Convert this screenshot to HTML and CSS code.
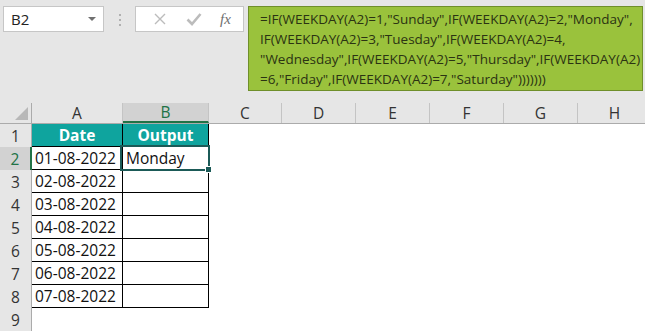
FILE: index.html
```html
<!DOCTYPE html>
<html lang="en">
<head>
    <meta charset="UTF-8">
    <title>WEEKDAY formula</title>
    <link rel="stylesheet" href="styles.css">
</head>
<body>
    <div class="toolbar">
        <div class="name-box">
            <span class="name">B2</span>
            <span class="caret"></span>
        </div>
        <div class="grip">
            <span></span><span></span><span></span>
        </div>
        <div class="fx-box">
            <svg class="fx-icon" width="14" height="14" viewBox="0 0 14 14">
                <path d="M2 2 L12 12 M12 2 L2 12" stroke="#bcbcbc" stroke-width="1.4" fill="none"/>
            </svg>
            <svg class="fx-icon" width="16" height="14" viewBox="0 0 16 14">
                <path d="M1.5 7.5 L6 12 L14.5 2" stroke="#bcbcbc" stroke-width="2.6" fill="none"/>
            </svg>
            <span class="fx">fx</span>
        </div>
        <div class="formula">
            =IF(WEEKDAY(A2)=1,"Sunday",IF(WEEKDAY(A2)=2,"Monday",<br>
            IF(WEEKDAY(A2)=3,"Tuesday",IF(WEEKDAY(A2)=4,<br>
            "Wednesday",IF(WEEKDAY(A2)=5,"Thursday",IF(WEEKDAY(A2)<br>
            =6,"Friday",IF(WEEKDAY(A2)=7,"Saturday")))))))
        </div>
    </div>

    <div class="sheet">
        <div class="row head">
            <div class="rh corner"><span class="tri"></span></div>
            <div class="ch col-a">A</div>
            <div class="ch col-b active">B</div>
            <div class="ch col-c">C</div>
            <div class="ch col-d">D</div>
            <div class="ch col-e">E</div>
            <div class="ch col-f">F</div>
            <div class="ch col-g">G</div>
            <div class="ch col-h">H</div>
        </div>
        <div class="row">
            <div class="rh">1</div>
            <div class="cell col-a title">Date</div>
            <div class="cell col-b title">Output</div>
        </div>
        <div class="row">
            <div class="rh active">2</div>
            <div class="cell col-a">01-08-2022</div>
            <div class="cell col-b selected">Monday</div>
        </div>
        <div class="row">
            <div class="rh">3</div>
            <div class="cell col-a">02-08-2022</div>
            <div class="cell col-b"></div>
        </div>
        <div class="row">
            <div class="rh">4</div>
            <div class="cell col-a">03-08-2022</div>
            <div class="cell col-b"></div>
        </div>
        <div class="row">
            <div class="rh">5</div>
            <div class="cell col-a">04-08-2022</div>
            <div class="cell col-b"></div>
        </div>
        <div class="row">
            <div class="rh">6</div>
            <div class="cell col-a">05-08-2022</div>
            <div class="cell col-b"></div>
        </div>
        <div class="row">
            <div class="rh">7</div>
            <div class="cell col-a">06-08-2022</div>
            <div class="cell col-b"></div>
        </div>
        <div class="row">
            <div class="rh">8</div>
            <div class="cell col-a">07-08-2022</div>
            <div class="cell col-b"></div>
        </div>
        <div class="row last">
            <div class="rh">9</div>
        </div>
    </div>
</body>
</html>
```

FILE: styles.css
```css
body {
    margin: 0;
    font-family: "Open Sans", "Liberation Sans", sans-serif;
    background-color: white;
    width: 645px;
    height: 332px;
    overflow: hidden;
}

.toolbar {
    display: flex;
    align-items: flex-start;
    height: 103px;
    padding: 6px 0 0 3px;
    box-sizing: border-box;
    background-color: #e6e6e6;
}

.name-box {
    display: flex;
    align-items: center;
    justify-content: space-between;
    width: 101px;
    height: 26px;
    padding: 0 7px 0 7px;
    box-sizing: border-box;
    background-color: white;
    border: 1px solid #c6c6c6;
}

.name {
    font-size: 15px;
    color: #222;
}

.caret {
    width: 0;
    height: 0;
    border-left: 4px solid transparent;
    border-right: 4px solid transparent;
    border-top: 4px solid #707070;
}

.grip {
    display: flex;
    flex-direction: column;
    gap: 3px;
    width: 31px;
    align-items: center;
    padding-top: 8px;
}

.grip span {
    width: 2px;
    height: 2px;
    background-color: #b0b0b0;
}

.fx-box {
    display: flex;
    align-items: center;
    justify-content: space-around;
    width: 109px;
    height: 26px;
    padding: 0 3px 0 8px;
    box-sizing: border-box;
    background-color: white;
    border: 1px solid #c6c6c6;
}

.fx {
    font-family: "Liberation Serif", serif;
    font-style: italic;
    font-size: 15px;
    color: #6e6e6e;
}

.formula {
    margin-left: 4px;
    width: 395px;
    height: 85px;
    padding: 2px 0 0 11px;
    box-sizing: border-box;
    background-color: #9ac23c;
    border: 1px solid #6f8f2a;
    font-size: 13.5px;
    line-height: 20px;
    color: #2b3313;
    white-space: nowrap;
}

.sheet {
    font-size: 15.5px;
    color: #111;
}

.row {
    display: flex;
    height: 23px;
}

.row.head {
    height: 21px;
    background-color: #e6e6e6;
    border-bottom: 1px solid #ababab;
    box-sizing: border-box;
}

.rh {
    width: 32px;
    flex: none;
    display: flex;
    align-items: center;
    justify-content: center;
    background-color: #e6e6e6;
    border-right: 1px solid #ababab;
    box-sizing: border-box;
    color: #333;
}

.rh.active {
    background-color: #d2d2d2;
    border-right: 2px solid #217346;
    color: #217346;
}

.corner {
    position: relative;
}

.tri {
    position: absolute;
    right: 3px;
    bottom: 3px;
    width: 0;
    height: 0;
    border-left: 13px solid transparent;
    border-bottom: 13px solid #b8b8b8;
}

.ch {
    flex: none;
    display: flex;
    align-items: center;
    justify-content: center;
    border-right: 1px solid #c4c4c4;
    box-sizing: border-box;
    color: #333;
}

.ch.active {
    background-color: #d2d2d2;
    border-bottom: 2px solid #217346;
    color: #217346;
}

.col-a { width: 91px; }
.col-b { width: 86px; }
.col-c { width: 73px; }
.col-d { width: 74px; }
.col-e { width: 74px; }
.col-f { width: 74px; }
.col-g { width: 74px; }
.col-h { width: 74px; }

.cell {
    flex: none;
    display: flex;
    align-items: center;
    padding-left: 3px;
    box-sizing: border-box;
    border-right: 1px solid #000;
    border-bottom: 1px solid #000;
}

.title {
    justify-content: center;
    padding-left: 0;
    background-color: #0fa49e;
    color: white;
    font-weight: bold;
}

.selected {
    position: relative;
}

.selected::after {
    content: "";
    position: absolute;
    left: -3px;
    top: -2px;
    right: -2px;
    bottom: -2px;
    border: 2px solid #1b5a57;
}

.selected::before {
    content: "";
    position: absolute;
    right: -4px;
    bottom: -4px;
    width: 5px;
    height: 5px;
    background-color: #1b5a57;
    border: 1px solid white;
    z-index: 1;
}
```
